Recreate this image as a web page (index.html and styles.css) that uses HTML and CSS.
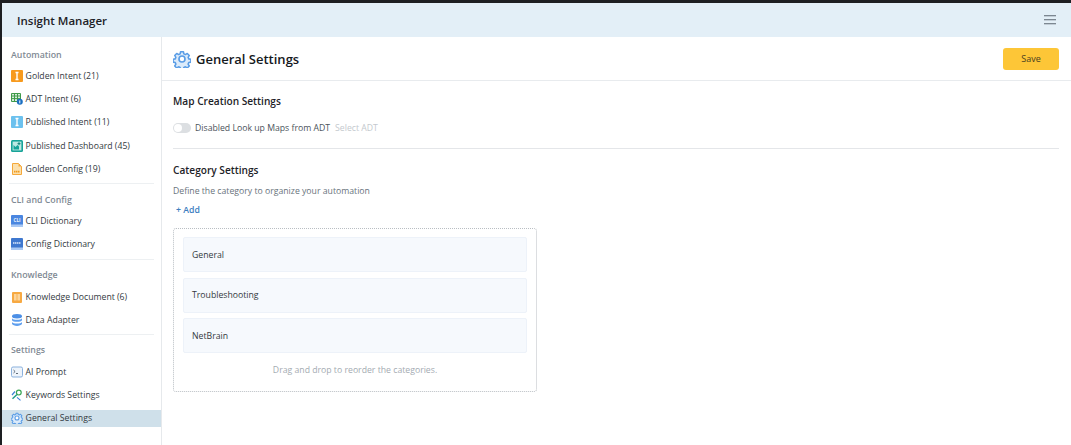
FILE: index.html
```html
<!DOCTYPE html>
<html lang="en">
<head>
<meta charset="utf-8">
<title>Insight Manager</title>
<link rel="stylesheet" href="styles.css">
</head>
<body>
<div class="frame">
  <header class="topbar">
    <div class="app-title">Insight Manager</div>
    <svg class="menu-icon" width="12" height="10" viewBox="0 0 12 10"><path d="M0 .75h12M0 4.75h12M0 8.75h12" stroke="#5b6670" stroke-width="1.2" fill="none"/></svg>
  </header>
  <div class="body">
    <nav class="sidebar">
      <section class="group">
        <h3 class="group-title">Automation</h3>
        <a class="item"><svg class="ico" viewBox="0 0 12 12"><rect width="12" height="12" rx="1" fill="#f79a1e"/><path d="M4.5 2.5h3M4.5 9.5h3M6 2.5v7" stroke="#fff" stroke-width="1.4"/></svg>Golden Intent (21)</a>
        <a class="item"><svg class="ico" viewBox="0 0 12 12"><path d="M.5.5h9v8h-9zM.5 3h9M.5 5.6h9M3.5.5v8M6.5.5v8" stroke="#3f9a4a" fill="#d9eedb" stroke-width="1"/><circle cx="8.8" cy="8.8" r="3" fill="#1b6fc2"/><path d="M8.8 7.4v3" stroke="#fff" stroke-width="1"/></svg>ADT Intent (6)</a>
        <a class="item"><svg class="ico" viewBox="0 0 12 12"><rect width="12" height="12" rx="1" fill="#6cc1ee"/><path d="M4.5 2.5h3M4.5 9.5h3M6 2.5v7" stroke="#fff" stroke-width="1.4"/></svg>Published Intent (11)</a>
        <a class="item"><svg class="ico" viewBox="0 0 12 12"><rect width="12" height="12" rx="1.5" fill="#17a398"/><rect x="1.6" y="1.6" width="8.8" height="8.8" fill="#bfe9e3"/><path d="M2.5 9.5V5l2 2 2-2 1.5 1.5v3z" fill="#17a398"/><path d="M8 2.2v3M6.5 3.7h3" stroke="#0e7f76" stroke-width="1"/></svg>Published Dashboard (45)</a>
        <a class="item"><svg class="ico" viewBox="0 0 12 12"><path d="M1.5.5h6l3 3v8h-9z" fill="#fbe0ae" stroke="#f5a83a"/><path d="M7.5.5v3h3" fill="#f5a83a"/><path d="M3 8.6h6" stroke="#f09a1e" stroke-width="1.8" stroke-dasharray="1.4 .5"/></svg>Golden Config (19)</a>
      </section>
      <section class="group">
        <h3 class="group-title">CLI and Config</h3>
        <a class="item"><svg class="ico" viewBox="0 0 12 12"><rect width="12" height="12" rx="1" fill="#4a86e0"/><rect y="9.5" width="12" height="2.5" fill="#a9c8f3"/><text class="ico-text" x="6" y="7">CLI</text></svg>CLI Dictionary</a>
        <a class="item"><svg class="ico" viewBox="0 0 12 12"><rect width="12" height="12" rx="1" fill="#3f78cf"/><rect y="9.5" width="12" height="2.5" fill="#a9c8f3"/><path d="M2 5h8" stroke="#dbe8fb" stroke-width="1.6" stroke-dasharray="1.4 .5"/></svg>Config Dictionary</a>
      </section>
      <section class="group">
        <h3 class="group-title">Knowledge</h3>
        <a class="item"><svg class="ico" viewBox="0 0 12 12"><rect x="1" y="1" width="10" height="11" rx="1" fill="#f7a942"/><rect x="3" y="3" width="2.6" height="6.5" fill="#fcd49a"/><rect x="6.4" y="3" width="2.6" height="6.5" fill="#fcd49a"/></svg>Knowledge Document (6)</a>
        <a class="item"><svg class="ico" viewBox="0 0 12 12"><ellipse cx="6" cy="2.3" rx="5" ry="2.2" fill="#4c8fe6"/><path d="M1 4.2c1 2 9 2 10 0v2c-1 2-9 2-10 0zM1 8c1 2 9 2 10 0v1.8c-1 2.8-9 2.8-10 0z" fill="#5f9fee"/></svg>Data Adapter</a>
      </section>
      <section class="group">
        <h3 class="group-title">Settings</h3>
        <a class="item"><svg class="ico" viewBox="0 0 12 12"><rect x=".5" y="1" width="11" height="10" rx="1.5" fill="#eef4fb" stroke="#8bb1dd"/><path d="M2.5 4l1.6 1.5L2.5 7M5 7.5h2" stroke="#3c4a5a" stroke-width=".8" fill="none"/></svg>AI Prompt</a>
        <a class="item"><svg class="ico" viewBox="0 0 12 12"><circle cx="7.8" cy="3.6" r="2.4" fill="#fff" stroke="#3aa655" stroke-width="1.2"/><path d="M6 5.4L1.5 9.8" stroke="#1f9c8a" stroke-width="1.4"/><path d="M1 6l3-3.5M6 8.4l3.5 3" stroke="#3b82d6" stroke-width="1.2"/></svg>Keywords Settings</a>
        <a class="item active"><svg class="ico" viewBox="0 0 24 24"><path class="gear" d="M10 1.8h4l.6 3 2.2 1 2.6-1.6 2.8 2.8-1.6 2.6.9 2.2 3 .6v4l-3 .6-.9 2.2 1.6 2.6-2.8 2.8-2.6-1.6-2.2.9-.6 3h-4l-.6-3-2.2-.9-2.6 1.6-2.8-2.8 1.6-2.6-.9-2.2-3-.6v-4l3-.6.9-2.2L1.8 7l2.8-2.8 2.6 1.6 2.2-1z" transform="translate(.6 .6) scale(.95)"/><circle class="gear-hole" cx="12" cy="12" r="4"/></svg>General Settings</a>
      </section>
    </nav>
    <main class="content">
      <div class="page-head">
        <div class="page-title">
          <svg class="title-ico" viewBox="0 0 24 24"><path class="gear" d="M10 1.8h4l.6 3 2.2 1 2.6-1.6 2.8 2.8-1.6 2.6.9 2.2 3 .6v4l-3 .6-.9 2.2 1.6 2.6-2.8 2.8-2.6-1.6-2.2.9-.6 3h-4l-.6-3-2.2-.9-2.6 1.6-2.8-2.8 1.6-2.6-.9-2.2-3-.6v-4l3-.6.9-2.2L1.8 7l2.8-2.8 2.6 1.6 2.2-1z" transform="translate(.6 .6) scale(.95)"/><circle class="gear-hole" cx="12" cy="12" r="4"/></svg>
          <h1>General Settings</h1>
        </div>
        <button class="save">Save</button>
      </div>
      <div class="panel">
        <h2 class="sec-title">Map Creation Settings</h2>
        <div class="toggle-row">
          <span class="toggle"><span class="knob"></span></span>
          <span class="toggle-label">Disabled Look up Maps from ADT</span>
          <span class="select-adt">Select ADT</span>
        </div>
        <hr class="rule">
        <h2 class="sec-title">Category Settings</h2>
        <p class="desc">Define the category to organize your automation</p>
        <a class="add">+ Add</a>
        <div class="cat-box">
          <div class="cat">General</div>
          <div class="cat">Troubleshooting</div>
          <div class="cat">NetBrain</div>
          <p class="hint">Drag and drop to reorder the categories.</p>
        </div>
      </div>
    </main>
  </div>
</div>
</body>
</html>
```
FILE: styles.css
```css
* { box-sizing: border-box; }
html, body { margin: 0; height: 100%; }
body {
  background: #1d1f22;
  font-family: "Open Sans", "Liberation Sans", sans-serif;
  font-size: 8.7px;
  color: #2c3136;
  overflow: hidden;
  padding: 3px 0 0 2px;
}
.frame { display: flex; flex-direction: column; height: 442px; background: #fff; }
.topbar {
  height: 34px;
  background: #e3eff7;
  display: flex;
  align-items: center;
  justify-content: space-between;
  padding: 0 15px;
  flex: none;
}
.app-title { font-size: 11.5px; font-weight: 600; color: #1c2126; }
.body { display: flex; flex: 1; min-height: 0; }
.sidebar {
  width: 160px;
  flex: none;
  border-right: 1px solid #e6e9ec;
  padding-top: 11.5px;
}
.group { margin: 0 7px 9.1px; border-bottom: 1px solid #edf0f2; }
.group:last-child { border-bottom: 0; margin-bottom: 0; }
.group-title { font-size: 8.8px; font-weight: 600; color: #7f8a94; margin: 0 0 6px 2px; height: 13px; line-height: 13px; }
.item {
  display: flex;
  align-items: center;
  gap: 2.6px;
  height: 17px;
  margin: 0 -7px 6.2px;
  padding-left: 9px;
  color: #333a41;
  white-space: nowrap;
}
.ico { width: 12px; height: 12px; flex: none; }
.ico-text { font-size: 4.6px; font-weight: 700; fill: #eef4fd; text-anchor: middle; }
.gear { fill: #dcebfa; stroke: #5a9de6; stroke-width: 2.2; stroke-linejoin: round; }
.gear-hole { fill: #fff; stroke: #5a9de6; stroke-width: 2.2; }
.active { background: #cfe0ea; }
.content { flex: 1; min-width: 0; }
.page-head {
  height: 44px;
  display: flex;
  align-items: center;
  justify-content: space-between;
  padding: 0 12px 0 11px;
  border-bottom: 1px solid #e8ebee;
}
.page-title { display: flex; align-items: center; gap: 5px; }
.title-ico { width: 18px; height: 18px; }
h1 { margin: 0; font-size: 13px; font-weight: 600; color: #15191d; }
.save {
  width: 56px;
  height: 22px;
  background: #fdc637;
  border: 0;
  border-radius: 3px;
  font: 9px "Open Sans", sans-serif;
  color: #4a4020;
  padding: 0;
}
.panel { padding: 13px 12px 0 11px; }
.sec-title { margin: 0; font-size: 10.15px; font-weight: 600; color: #1d2227; }
.toggle-row { display: flex; align-items: center; margin-top: 13px; height: 13px; }
.toggle { width: 18px; height: 10px; border-radius: 5px; background: #dcdfe2; position: relative; margin-right: 4px; }
.knob { position: absolute; left: 1px; top: 1px; width: 8px; height: 8px; border-radius: 50%; background: #fff; }
.toggle-label { color: #4b535b; }
.select-adt { color: #c4c9ce; margin-left: 5px; }
.rule { border: 0; border-top: 1px solid #e4e6e9; margin: 14px 0 14px; }
.desc { margin: 8px 0 0; color: #69737c; }
.add { display: block; margin: 6.5px 0 0 3px; color: #3d7ebf; font-weight: 600; }
.cat-box {
  width: 364px;
  margin-top: 12.5px;
  padding: 8px 9px;
  border: 1px dotted #b9bec3;
  border-radius: 3px;
}
.cat {
  height: 35px;
  margin-bottom: 5.5px;
  padding-left: 8px;
  display: flex;
  align-items: center;
  background: #f6f9fd;
  border: 1px solid #edf2f9;
  border-radius: 2px;
  color: #343a40;
}
.hint { margin: 11px 0 7px; text-align: center; color: #a4abb2; }
```
